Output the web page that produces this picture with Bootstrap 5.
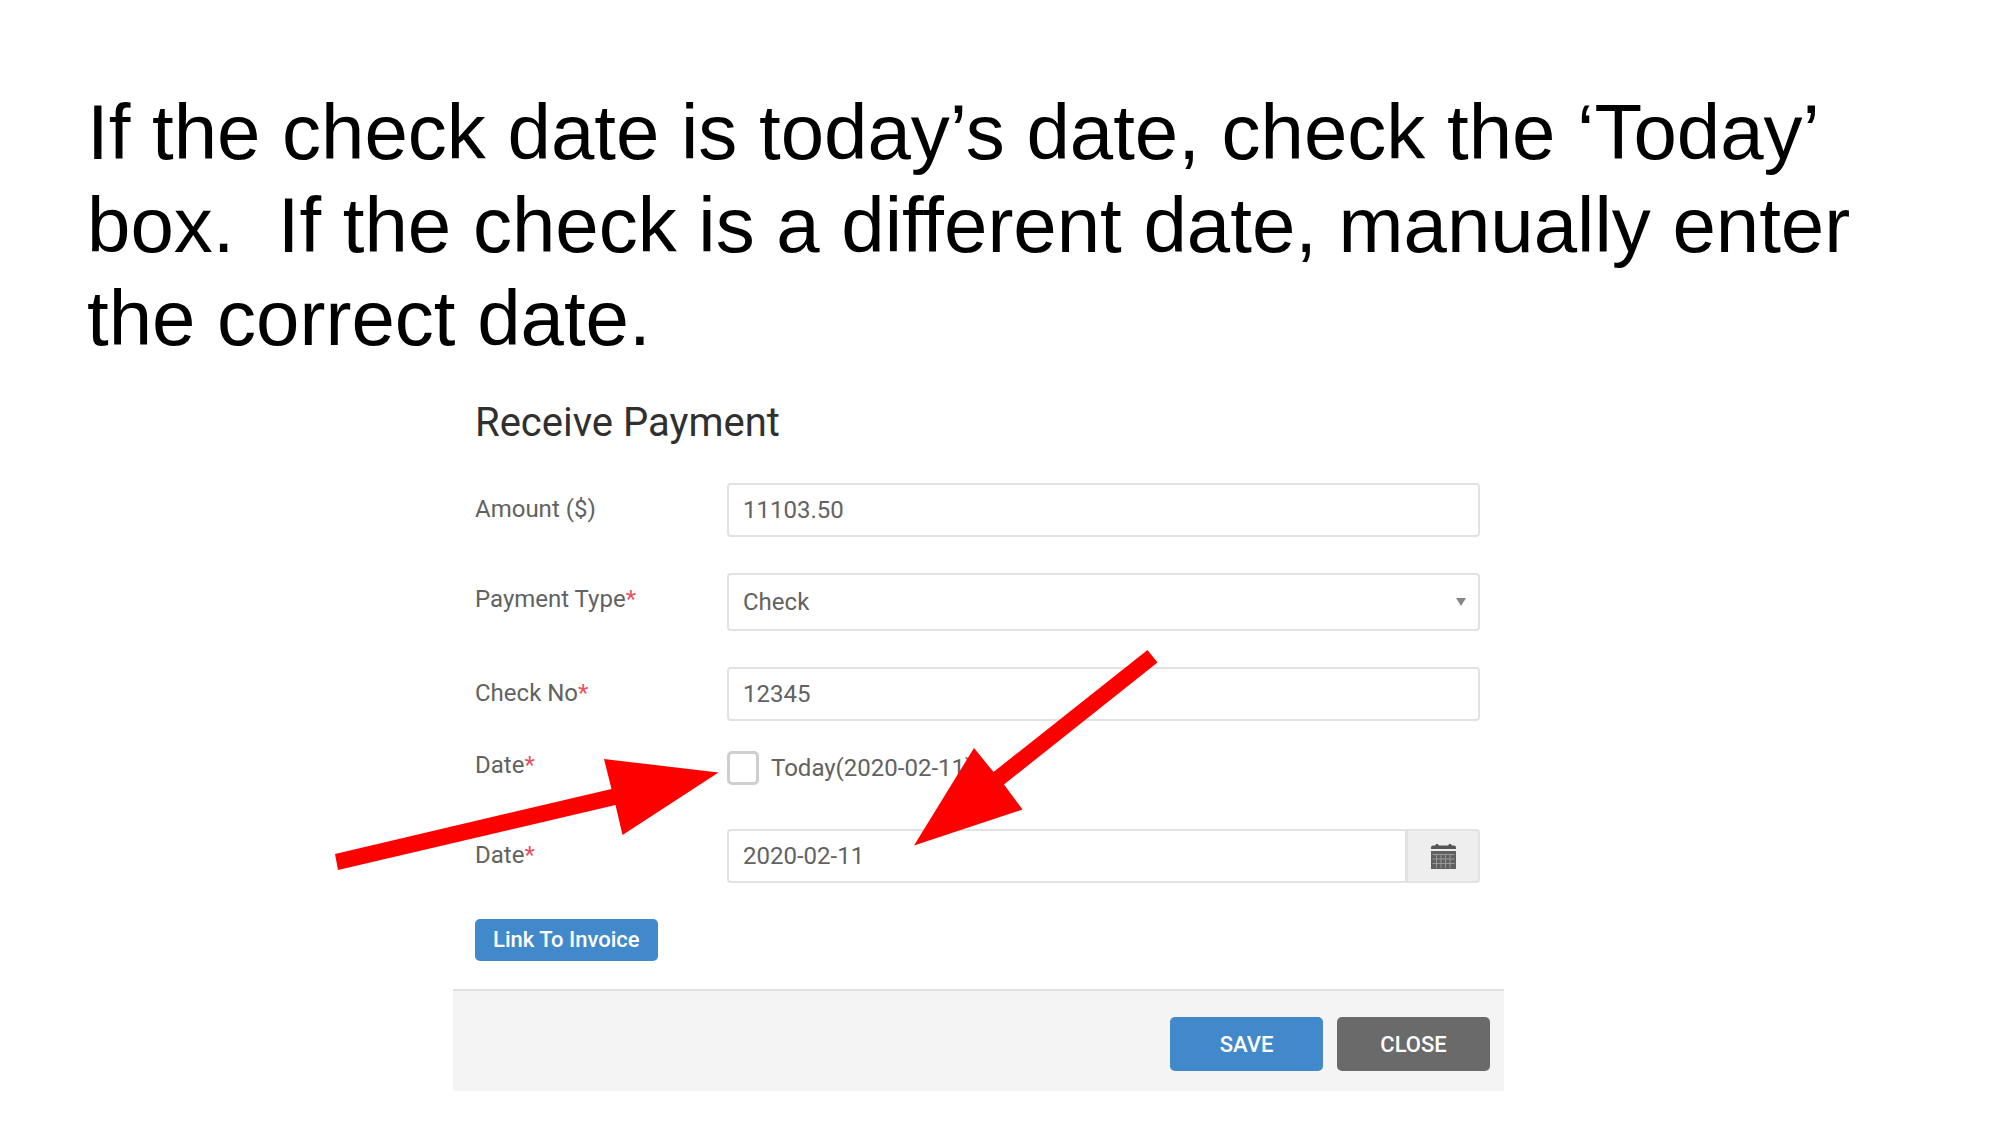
<!DOCTYPE html>
<html lang="en">
<head>
<meta charset="utf-8">
<meta name="viewport" content="width=device-width, initial-scale=1">
<title>Receive Payment</title>
<link rel="stylesheet" href="https://cdn.jsdelivr.net/npm/bootstrap@5.3.0/dist/css/bootstrap.min.css">
<style>
  body { background: #fff; color: #000; }
  .slide-title {
    font-family: "Liberation Sans", Arial, sans-serif;
    font-size: 78px; line-height: 93px; font-weight: 400;
    padding: 86px 87px 0; margin: 0 0 34px;
  }
  .payment {
    font-family: Roboto, sans-serif; font-size: 24px; line-height: 28px;
    width: 52.55%; margin-left: 22.65%; color: #626262;
  }
  .payment-body { padding: 0 24px 28px 22px; }
  .payment h2 { font-size: 40px; line-height: 48px; margin-bottom: 36px; font-weight: 400; color: #303030; }
  .field-row { margin-bottom: 36px; }
  .field-row.before-tick { margin-bottom: 30px; }
  .field-row.tick-row { margin-bottom: 44px; }
  .field-name { flex: 0 0 252px; padding-top: 12px; }
  .tick-row .field-name { padding-top: 0; }
  .field-name span { color: #e8505f; }
  .payment .form-control, .payment .form-select {
    font-size: 24px; line-height: 28px; height: 54px; padding: 0 14px;
    color: #626262; border: 2px solid #e2e2e2; border-radius: 4px; background-color: #fff;
  }
  .payment .form-select {
    height: 58px;
    background-image: url("data:image/svg+xml,%3Csvg xmlns='http://www.w3.org/2000/svg' viewBox='0 0 10 8'%3E%3Cpath d='M0 0h10L5 8z' fill='%23888'/%3E%3C/svg%3E");
    background-size: 10px 8px; background-position: right 12px center;
  }
  .payment .form-check-input {
    width: 32px; height: 34px; margin: 0; border: 3px solid #cecece; border-radius: 5px; float: none;
  }
  .tick-text { margin-left: 12px; }
  .cal-btn { width: 74px; background: #eee; border: 2px solid #e2e2e2; border-radius: 4px; padding: 0; }
  .payment .btn { color: #fff; border: 0; border-radius: 5px; }
  .link-btn { background: #4189ca; font-size: 22px; line-height: 26px; font-weight: 500; padding: 8px 18px; }
  .payment-foot { background: #f4f4f4; border-top: 2px solid #dfe1e3; padding: 26px 14px 20px; gap: 14px; }
  .foot-btn { width: 153px; height: 54px; font-size: 22px; font-weight: 500; padding: 0; }
  .save-btn { background: #4189ca; }
  .close-btn { background: #6a6a6a; }
  .arrows { left: 0; top: 0; width: 100%; pointer-events: none; overflow: visible; }
</style>
<script src="https://cdn.jsdelivr.net/npm/bootstrap@5.3.0/dist/js/bootstrap.bundle.min.js"></script>
</head>
<body>
<main>
  <h1 class="slide-title">If the check date is today’s date, check the ‘Today’ box.&nbsp; If the check is a different date, manually enter the correct date.</h1>

  <form class="payment position-relative">
    <div class="payment-body">
      <h2>Receive Payment</h2>
      <div class="field-row d-flex align-items-start">
        <label class="field-name" for="amount">Amount ($)</label>
        <input class="form-control" id="amount" type="text" value="11103.50">
      </div>
      <div class="field-row d-flex align-items-start">
        <label class="field-name" for="ptype">Payment Type<span>*</span></label>
        <select class="form-select" id="ptype"><option>Check</option></select>
      </div>
      <div class="field-row before-tick d-flex align-items-start">
        <label class="field-name" for="checkno">Check No<span>*</span></label>
        <input class="form-control" id="checkno" type="text" value="12345">
      </div>
      <div class="field-row tick-row d-flex align-items-start">
        <div class="field-name">Date<span>*</span></div>
        <div class="d-flex align-items-center">
          <input class="form-check-input" id="today" type="checkbox">
          <label class="tick-text" for="today">Today(2020-02-11)</label>
        </div>
      </div>
      <div class="field-row d-flex align-items-start">
        <label class="field-name" for="date">Date<span>*</span></label>
        <div class="input-group">
          <input class="form-control" id="date" type="text" value="2020-02-11">
          <button class="cal-btn d-flex align-items-center justify-content-center" type="button" aria-label="Pick a date">
            <svg width="25" height="26" viewBox="0 0 25 26" aria-hidden="true">
              <path d="M0 6V4.500Q0 2.500 2 2.500h2Q6 -1 8 2.500h9Q19 -1 21 2.500h2Q25 2.500 25 4.500V6z" fill="#555"/>
              <path d="M0 8h25v18H0z" fill="#606060"/>
              <path d="M1.500 11.500h22M1.500 16h22M1.500 20.500h22M5.500 11v14M10 11v14M14.500 11v14M19 11v14" stroke="#999" stroke-width="1"/>
            </svg>
          </button>
        </div>
      </div>
      <button class="btn link-btn" type="button">Link To Invoice</button>
    </div>
    <div class="payment-foot d-flex justify-content-end">
      <button class="btn foot-btn save-btn" type="submit">SAVE</button>
      <button class="btn foot-btn close-btn" type="button">CLOSE</button>
    </div>
    <svg class="arrows position-absolute" viewBox="453 399 1051 693" aria-hidden="true">
      <path d="M335 854L611.500 789L604 759L718.500 772.500L622.500 835L615.500 805L338 870Z" fill="#f00"/>
      <path d="M1147.500 650L993.500 772L974 748L914 845.500L1022.500 809.500L1004 784.500L1157.500 662.500Z" fill="#f00"/>
    </svg>
  </form>
</main>
</body>
</html>
